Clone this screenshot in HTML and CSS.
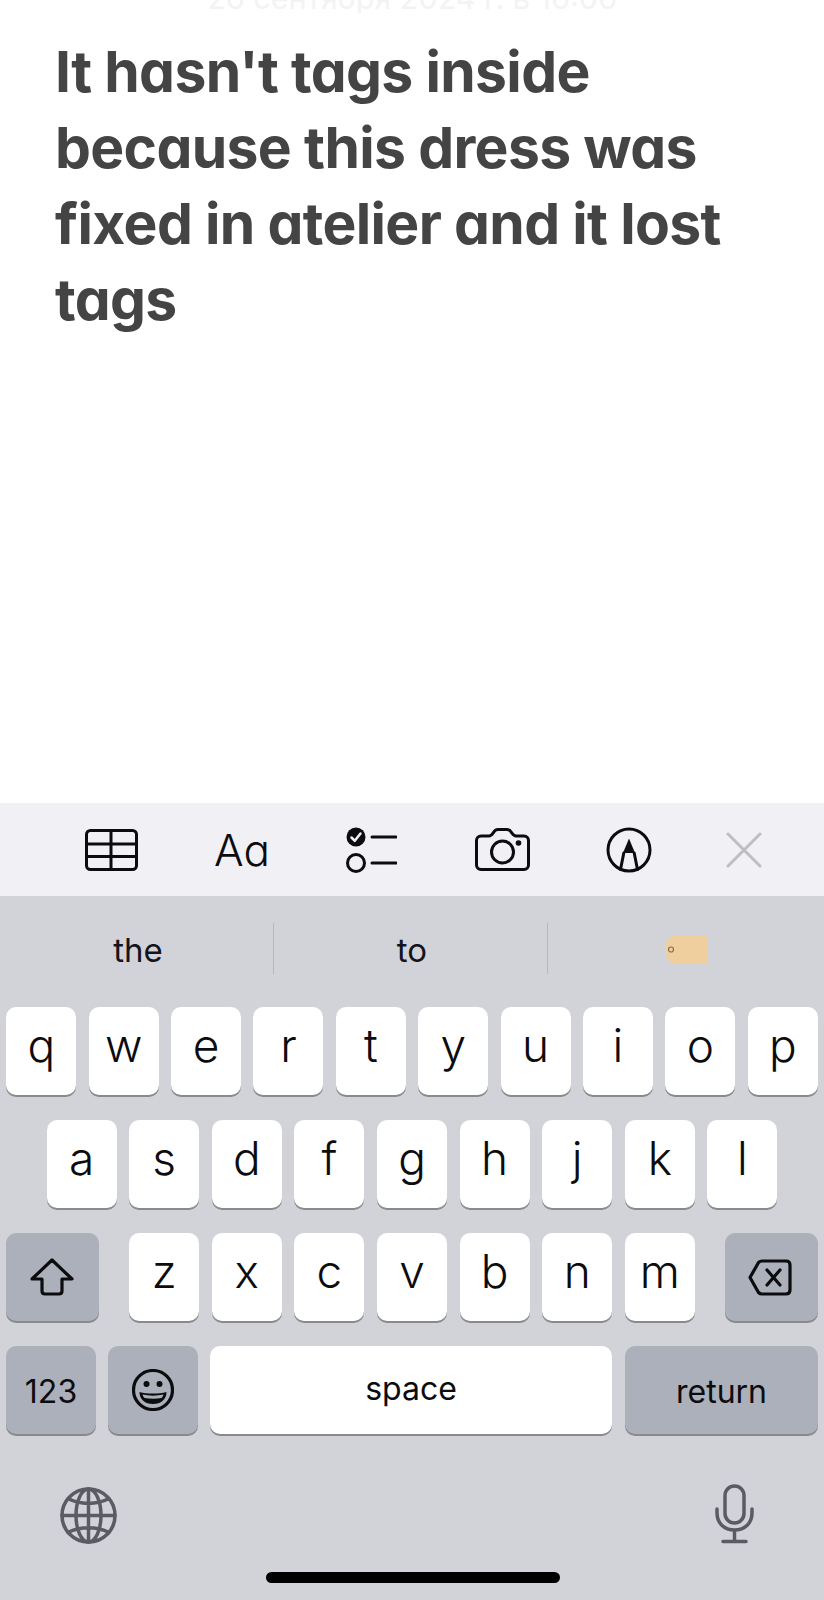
FILE: index.html
```html
<!DOCTYPE html>
<html lang="en">
<head>
    <meta charset="UTF-8">
    <meta name="viewport" content="width=device-width, initial-scale=1.0">
    <title>Notes</title>
    <link rel="stylesheet" href="styles.css">
</head>
<body>

<div class="note">
    <div class="note-date"><span>26 сентября 2024 г. в 16:06</span></div>
    <p class="note-text">It hasn't tags inside<br>because this dress was<br>fixed in atelier and it lost<br>tags</p>
</div>

<div class="toolbar">
    <svg class="tool tool-table" viewBox="0 0 53 42">
        <rect x="1.5" y="1.5" width="50" height="39" rx="4"/>
        <path d="M1.5 15H51.5M1.5 27.5H51.5M26 1.5V40.5"/>
    </svg>
    <span class="tool tool-font">Aa</span>
    <svg class="tool tool-list" viewBox="0 0 51 46">
        <circle class="solid" cx="10" cy="10" r="9.5"/>
        <path class="tick" d="M5.5 10.5L8.8 13.8L14.5 6.5"/>
        <circle cx="10" cy="36" r="8.5"/>
        <path d="M26 10H50M26 36H50"/>
    </svg>
    <svg class="tool tool-camera" viewBox="0 0 55 43">
        <path d="M6 8H14C16 8 17 6.5 18.500 4.500C19.500 2.500 21 1.500 23 1.500H32C34 1.500 35.500 2.500 36.500 4.500C38 6.500 39 8 41 8H49C51.500 8 53.500 10 53.500 12.500V37C53.500 39.500 51.500 41.500 49 41.500H6C3.500 41.500 1.500 39.500 1.500 37V12.500C1.500 10 3.500 8 6 8Z"/>
        <circle cx="27.500" cy="24" r="11"/>
        <circle class="solid" cx="43.500" cy="15" r="2.800"/>
    </svg>
    <svg class="tool tool-markup" viewBox="0 0 46 46">
        <circle cx="23" cy="23" r="21"/>
        <path class="solid" d="M23 11.500L29 26H17Z"/>
        <path d="M17.800 26L14.500 42.500M28.200 26L31.500 42.500"/>
    </svg>
    <svg class="tool tool-close" viewBox="0 0 36 36">
        <path d="M2 2L34 34M34 2L2 34"/>
    </svg>
</div>

<div class="keyboard">
    <div class="suggestions">
        <div class="suggestion">the</div>
        <div class="suggestion">to</div>
        <div class="suggestion">
            <svg class="tag" viewBox="0 0 43 27">
                <path d="M8 0H43V27H8C4 27 0 20 0 13.500C0 7 4 0 8 0Z"/>
                <circle cx="6" cy="13.500" r="2.500"/>
            </svg>
        </div>
    </div>

    <div class="row row-top">
        <div class="key">q</div>
        <div class="key">w</div>
        <div class="key">e</div>
        <div class="key">r</div>
        <div class="key">t</div>
        <div class="key">y</div>
        <div class="key">u</div>
        <div class="key">i</div>
        <div class="key">o</div>
        <div class="key">p</div>
    </div>
    <div class="row row-middle">
        <div class="key">a</div>
        <div class="key">s</div>
        <div class="key">d</div>
        <div class="key">f</div>
        <div class="key">g</div>
        <div class="key">h</div>
        <div class="key">j</div>
        <div class="key">k</div>
        <div class="key">l</div>
    </div>
    <div class="row row-bottom">
        <div class="key key-dark key-shift">
            <svg class="key-icon icon-shift" width="44" height="38" viewBox="0 0 44 38">
                <path d="M22 2L42 21H32V33C32 35 31 36 29 36H15C13 36 12 35 12 33V21H2Z"/>
            </svg>
        </div>
        <div class="letters">
            <div class="key">z</div>
            <div class="key">x</div>
            <div class="key">c</div>
            <div class="key">v</div>
            <div class="key">b</div>
            <div class="key">n</div>
            <div class="key">m</div>
        </div>
        <div class="key key-dark key-shift">
            <svg class="key-icon icon-delete" width="44" height="37" viewBox="0 0 44 37">
                <path d="M14 2H38C40.500 2 42 3.500 42 6V31C42 33.500 40.500 35 38 35H14C12.500 35 11.500 34.500 10.500 33.500L2 18.500L10.500 3.500C11.500 2.500 12.500 2 14 2Z"/>
                <path d="M19 11L32 26M32 11L19 26"/>
            </svg>
        </div>
    </div>
    <div class="row row-last">
        <div class="key key-dark key-label key-123">123</div>
        <div class="key key-dark key-emoji">
            <svg class="key-icon icon-emoji" width="42" height="42" viewBox="0 0 42 42">
                <circle cx="21" cy="21" r="19.500"/>
                <circle class="solid" cx="14.500" cy="15" r="3"/>
                <circle class="solid" cx="27.500" cy="15" r="3"/>
                <path class="solid" d="M7.500 23C15 25 27 25 34.500 23C34.500 30.500 29 35 21 35C13 35 7.500 30.500 7.500 23Z"/>
                <path class="teeth" d="M10.500 25.500C17 27 25 27 31.500 25.500C31 27 30.500 28 29.500 29C24 30 18 30 12.500 29C11.500 28 11 27 10.500 25.500Z"/>
            </svg>
        </div>
        <div class="key key-label key-space">space</div>
        <div class="key key-dark key-label key-return">return</div>
    </div>

    <div class="fn-row">
        <svg class="fn-icon fn-globe" width="57" height="57" viewBox="0 0 57 57">
            <circle cx="28.500" cy="28.500" r="26.500"/>
            <ellipse cx="28.500" cy="28.500" rx="12.500" ry="26.500"/>
            <path d="M28.500 2V55M2 28.500H55M8 11.500C20 18 37 18 49 11.500M8 45.500C20 39 37 39 49 45.500"/>
        </svg>
        <svg class="fn-icon" width="39" height="60" viewBox="0 0 39 60">
            <rect x="10" y="2" width="19" height="37" rx="9.500"/>
            <path d="M2 25V29C2 39 9 46 19.500 46C30 46 37 39 37 29V25M19.500 46V57M8 57.500H31"/>
        </svg>
    </div>

    <div class="home-bar"></div>
</div>

</body>
</html>
```

FILE: styles.css
```css
body {
    margin: 0;
    height: 1600px;
    overflow: hidden;
    background-color: #fff;
    font-family: "Inter", "Liberation Sans", sans-serif;
}
svg {
    display: block;
}

.note {
    height: 803px;
    box-sizing: border-box;
    overflow: hidden;
}
.note-date {
    height: 13px;
    overflow: hidden;
    display: flex;
    justify-content: center;
    align-items: flex-end;
    color: #f3f3f3;
    font-size: 30.500px;
    line-height: 31px;
}
.note-text {
    margin: 21px 0 0 55px;
    font-size: 57px;
    font-weight: 700;
    line-height: 76px;
    letter-spacing: -0.65px;
    color: #444;
    font-feature-settings: "cv11";
}

.toolbar {
    height: 93px;
    background-color: #f0f0f5;
    padding-left: 85px;
    display: flex;
    align-items: center;
    gap: 77px;
}
.tool {
    fill: none;
    stroke: #0c0c0e;
    stroke-width: 3;
    stroke-linecap: round;
    stroke-linejoin: round;
}
.tool .solid {
    fill: #0c0c0e;
    stroke: none;
}
.tool .tick {
    stroke: #f0f0f5;
    stroke-width: 2.5;
}
.tool-table {
    width: 53px;
    height: 42px;
}
.tool-font {
    width: 55px;
    margin-left: -1px;
    font-size: 44px;
    font-weight: 300;
    line-height: 44px;
    color: #0c0c0e;
    font-feature-settings: "cv11";
}
.tool-list {
    width: 51px;
    height: 46px;
}
.tool-camera {
    width: 55px;
    height: 43px;
    margin-top: -1px;
    margin-left: 1px;
}
.tool-markup {
    width: 46px;
    height: 46px;
    margin-left: -1px;
}
.tool-close {
    width: 36px;
    height: 36px;
    margin-left: -3px;
    stroke: #bdbdc2;
}

.keyboard {
    height: 704px;
    background-color: #d1d3d9;
    overflow: hidden;
}
.suggestions {
    height: 111px;
    box-sizing: border-box;
    padding-top: 27px;
    display: flex;
    align-items: flex-start;
}
.suggestion {
    width: 274px;
    height: 51px;
    display: flex;
    justify-content: center;
    align-items: center;
    padding: 2px 0 0 3px;
    font-size: 33px;
    color: #14141a;
    border-right: 1px solid #b6b8be;
    box-sizing: border-box;
}
.suggestion:last-child {
    border-right: none;
}
.tag {
    width: 43px;
    height: 27px;
    fill: #f0cf9e;
}
.tag circle {
    fill: none;
    stroke: #8a6a58;
    stroke-width: 1.2;
}

.row {
    display: flex;
    height: 88px;
    margin-bottom: 25px;
    justify-content: center;
    gap: 12.6px;
}
.row-top {
    gap: 12.4px;
}
.row-bottom {
    justify-content: space-between;
    padding: 0 6px;
}
.row-last {
    margin-bottom: 0;
    padding: 0 6px;
    justify-content: flex-start;
    gap: 12px;
}
.letters {
    display: flex;
    gap: 12.6px;
}
.key {
    width: 70px;
    height: 88px;
    background-color: #fff;
    border-radius: 10px;
    box-shadow: 0 2px 0 #898a8d;
    display: flex;
    justify-content: center;
    align-items: center;
    font-size: 46px;
    font-weight: 300;
    color: #0c0c0e;
    padding-bottom: 12px;
    box-sizing: border-box;
}
.key-dark {
    background-color: #abb0ba;
}
.key-shift {
    width: 93px;
    padding-bottom: 0;
}
.key-label {
    font-size: 32px;
    font-weight: 400;
    padding-bottom: 0;
}
.key-123 {
    width: 90px;
    padding-top: 2px;
}
.key-emoji {
    width: 90px;
    padding-bottom: 0;
}
.key-space {
    width: 402px;
    padding-bottom: 4px;
}
.key-return {
    width: 193px;
    margin-left: 1px;
    padding-top: 3px;
}
.key-icon {
    fill: none;
    stroke: #0c0c0e;
    stroke-width: 3.200;
    stroke-linecap: round;
    stroke-linejoin: round;
}
.key-icon .solid {
    fill: #0c0c0e;
    stroke: none;
}
.key-icon .teeth {
    fill: #abb0ba;
    stroke: none;
}
.icon-shift {
    margin-left: -2px;
}
.icon-delete {
    margin-left: -3px;
}

.fn-row {
    display: flex;
    justify-content: space-between;
    align-items: center;
    padding: 0 70px 0 60px;
    margin-top: 50px;
    height: 60px;
}
.fn-globe {
    margin-top: 2px;
}
.fn-icon {
    fill: none;
    stroke: #5a5b63;
    stroke-width: 3.500;
    stroke-linecap: round;
    stroke-linejoin: round;
}
.home-bar {
    width: 294px;
    height: 11px;
    margin: 28px 0 0 266px;
    background-color: #000;
    border-radius: 6px;
}
```
